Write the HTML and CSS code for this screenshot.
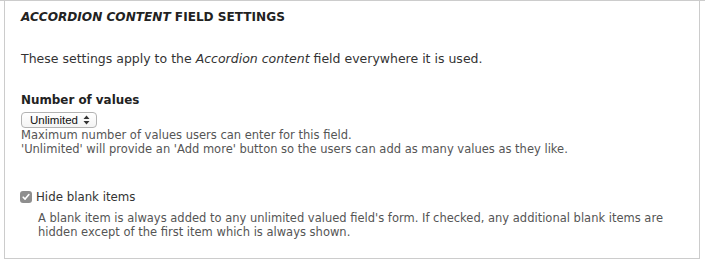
FILE: index.html
```html
<!DOCTYPE html>
<html>
<head>
<meta charset="utf-8">
<link rel="stylesheet" href="styles.css">
</head>
<body>
<div class="page">
  <div class="fieldset">
    <div class="title"><em>Accordion content</em> field settings</div>
    <p class="intro">These settings apply to the <em>Accordion content</em> field everywhere it is used.</p>
    <div class="item">
      <div class="label">Number of values</div>
      <div class="select"><span class="select-text">Unlimited</span>
        <svg class="arrows" width="7" height="10" viewBox="0 0 7 10"><path d="M3.5 0.5 L6.5 4 L0.5 4 Z M0.5 6 L6.5 6 L3.5 9.5 Z" fill="#333"/></svg>
      </div>
      <div class="desc">Maximum number of values users can enter for this field.<br>'Unlimited' will provide an 'Add more' button so the users can add as many values as they like.</div>
    </div>
    <div class="check-item">
      <div class="check-row">
        <span class="checkbox"><svg width="12" height="12" viewBox="0 0 12 12"><path d="M3.2 6.2 L5.1 8.1 L8.9 3.6" fill="none" stroke="#fff" stroke-width="1.6" stroke-linecap="round" stroke-linejoin="round"/></svg></span>
        <span class="check-label">Hide blank items</span>
      </div>
      <div class="desc indent">A blank item is always added to any unlimited valued field's form. If checked, any additional blank items are hidden except of the first item which is always shown.</div>
    </div>
  </div>
</div>
</body>
</html>
```
FILE: styles.css
```css
html, body {
  margin: 0;
  padding: 0;
  background: #fff;
}
body {
  font-family: "DejaVu Sans", Verdana, sans-serif;
  font-size: 12.5px;
  color: #333;
}
.page {
  border-top: 1px solid #ccc;
  width: 705px;
  height: 263px;
}
.fieldset {
  margin-left: 4px;
  border: 1px solid #ccc;
  border-top: none;
  padding: 7px 0 19px 16px;
  box-sizing: border-box;
  width: 696px;
}
.title {
  line-height: 18px;
  font-size: 12.1px;
  font-weight: bold;
  text-transform: uppercase;
  color: #222;
}
.title em {
  font-style: italic;
}
.intro {
  margin: 24px 0 0;
  line-height: 18px;
}
.item {
  margin-top: 23px;
}
.label {
  line-height: 18px;
  font-size: 11.9px;
  font-weight: bold;
  color: #222;
}
.select {
  margin-top: 3px;
  width: 76px;
  height: 16px;
  box-sizing: border-box;
  border: 1px solid #b3b3b3;
  border-radius: 4px;
  background: linear-gradient(#fff, #f4f4f4);
  display: flex;
  align-items: center;
  justify-content: space-between;
  padding: 0 6px 0 8px;
  font-family: "Liberation Sans", Arial, sans-serif;
  font-size: 11.5px;
  color: #111;
}
.select-text {
  line-height: 13px;
}
.arrows {
  display: block;
}
.desc {
  font-size: 11.5px;
  line-height: 14px;
  color: #555;
}
.check-item {
  margin-top: 32px;
}
.check-row {
  display: flex;
  align-items: center;
  height: 18px;
  gap: 4px;
}
.checkbox {
  width: 12px;
  height: 12px;
  border-radius: 3px;
  background: #8e8e8e;
  display: block;
  margin-left: -1px;
}
.checkbox svg {
  display: block;
}
.check-label {
  line-height: 18px;
  font-size: 11.8px;
  color: #333;
}
.desc.indent {
  margin-top: 5px;
  margin-left: 17px;
}
```
